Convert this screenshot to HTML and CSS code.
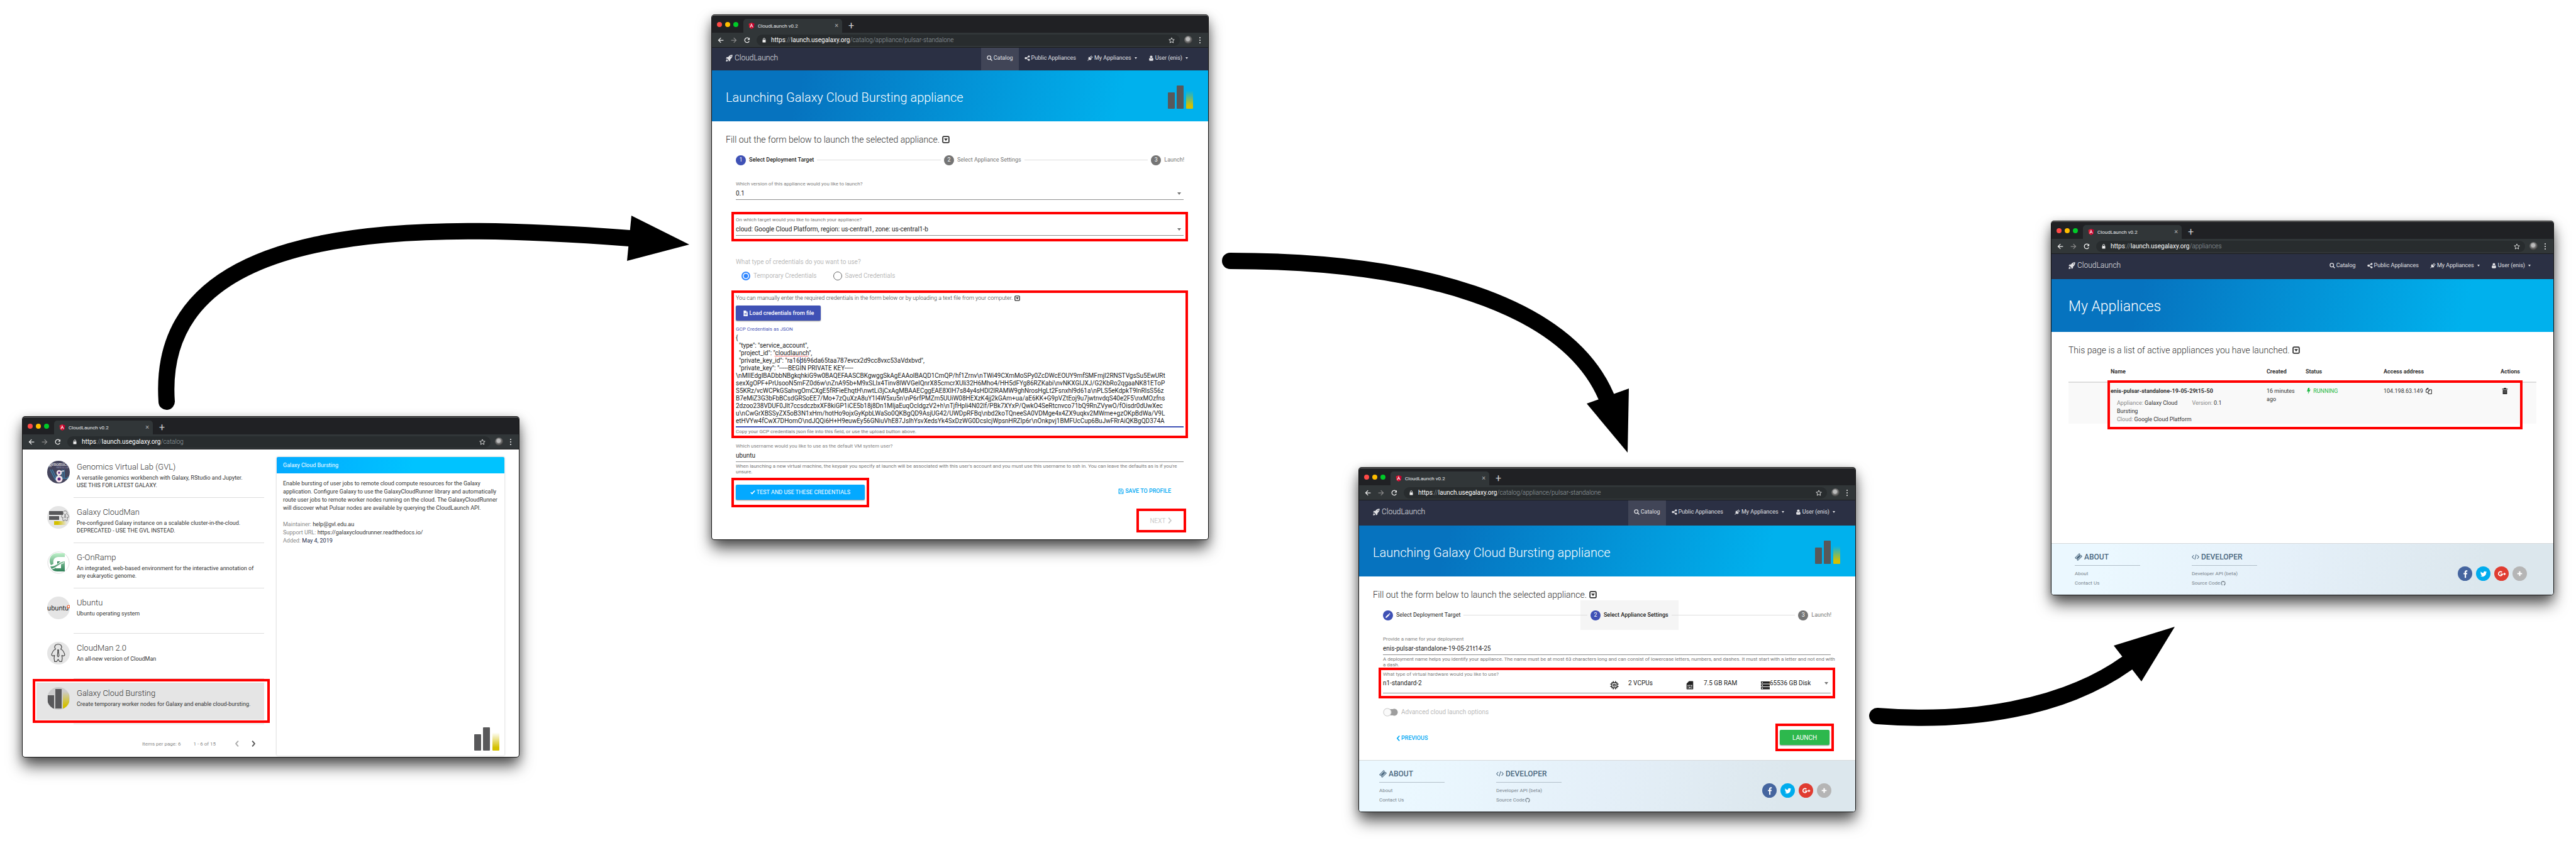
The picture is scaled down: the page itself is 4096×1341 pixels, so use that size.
FILE: index.html
```html
<!DOCTYPE html>
<html lang="en">
<head>
<meta charset="utf-8">
<meta name="viewport" content="width=device-width, initial-scale=1">
<title>CloudLaunch: launching an appliance</title>
<link rel="stylesheet" href="styles.css">
</head>
<body>
<svg class="sprite" aria-hidden="true">
  <defs>
    <linearGradient id="gold" x1="0" y1="0" x2="0" y2="1"><stop offset="0.1" stop-color="#d4c000" stop-opacity="0"/><stop offset="0.85" stop-color="#d4c000"/></linearGradient>
    <linearGradient id="goldx" x1="0" y1="0" x2="1" y2="0"><stop offset="0.3" stop-color="#d4c000"/><stop offset="1" stop-color="#d4c000" stop-opacity="0"/></linearGradient>
    <linearGradient id="green" x1="0" y1="0" x2="0" y2="1"><stop offset="0" stop-color="#bdf0c8"/><stop offset="1" stop-color="#2f8057"/></linearGradient>
    <clipPath id="round"><circle cx="18" cy="18" r="18"/></clipPath>
  </defs>
  <symbol id="angular" viewBox="0 0 16 16"><path fill="#dd1b34" d="M8 0l7 2.600-1.100 9.900L8 16l-5.900-3.500L1 2.600z"/><path fill="#c3002f" d="M8 0l7 2.600-1.100 9.900L8 16z"/><path fill="#fff" fill-rule="evenodd" d="M8 1.800L3.700 11.800h1.700l.9-2.200h3.400l.9 2.200h1.700zM8 5.300l1.300 3H6.700z"/></symbol>
  <symbol id="back" viewBox="0 0 16 16"><path fill="none" stroke="currentColor" stroke-width="2" d="M15 8H2.500M8.500 1.800L2.300 8l6.200 6.200"/></symbol>
  <symbol id="forward" viewBox="0 0 16 16"><path fill="none" stroke="currentColor" stroke-width="2" d="M1 8h12.500M7.500 1.800L13.700 8l-6.200 6.200"/></symbol>
  <symbol id="reload" viewBox="0 0 16 16"><path fill="none" stroke="currentColor" stroke-width="2.100" d="M13.300 10.500A6 6 0 1 1 12.300 3.800"/><path fill="currentColor" d="M14.500 1v6h-6z"/></symbol>
  <symbol id="lock" viewBox="0 0 16 16"><path fill="none" stroke="currentColor" stroke-width="1.800" d="M5 7V4.500a3 3 0 0 1 6 0V7"/><rect x="3" y="6.500" width="10" height="8.500" rx="1" fill="currentColor"/></symbol>
  <symbol id="star" viewBox="0 0 16 16"><path fill="none" stroke="currentColor" stroke-width="1.400" stroke-linejoin="round" d="M8 1.500l2 4.500 4.800.5-3.600 3.200 1.100 4.800L8 12l-4.300 2.500 1.100-4.800L1.200 6.500 6 6z"/></symbol>
  <symbol id="rocket" viewBox="0 0 16 16"><path fill="currentColor" fill-rule="evenodd" d="M15.500.5C11 .2 8.200 2 5.600 5.300L2.200 5.600.3 9l3 .2 3.500 3.500.3 3 3.300-1.900.3-3.400C14 7.800 15.800 5 15.500.5zM12 5.200a1.200 1.200 0 1 1 0-2.400 1.200 1.200 0 0 1 0 2.400zM2.300 10.500C.8 11.500.8 13.500.5 15.500c2 0 4-.3 5-1.800z"/></symbol>
  <symbol id="search" viewBox="0 0 16 16"><circle cx="6.700" cy="6.700" r="5" fill="none" stroke="currentColor" stroke-width="2.300"/><path stroke="currentColor" stroke-width="2.800" stroke-linecap="round" d="M10.700 10.700l3.600 3.600"/></symbol>
  <symbol id="share" viewBox="0 0 16 16"><path fill="none" stroke="currentColor" stroke-width="2" d="M12.500 3.200L4 8l8.500 4.800"/><circle cx="12.300" cy="3.300" r="2.800" fill="currentColor"/><circle cx="3.500" cy="8" r="2.900" fill="currentColor"/><circle cx="12.300" cy="12.700" r="2.800" fill="currentColor"/></symbol>
  <symbol id="plug" viewBox="0 0 16 16"><path fill="currentColor" d="M5 4l7 7c-2 2.200-5 2.800-7.400 1.600L1.500 15.700.3 14.500l3.100-3.100C2.200 9 2.800 6 5 4z"/><path fill="none" stroke="currentColor" stroke-width="2" stroke-linecap="round" d="M8 5.500L11.500 2M10.800 8.300l3.500-3.500"/></symbol>
  <symbol id="user" viewBox="0 0 16 16"><circle cx="8" cy="4.500" r="3.700" fill="currentColor"/><path fill="currentColor" d="M4.300 7.300C2.300 8 2 10.500 2 12.500 2 14.500 3 15.500 4.500 15.500h7c1.500 0 2.500-1 2.500-3 0-2-.3-4.500-2.300-5.200a5 5 0 0 1-7.400 0z"/></symbol>
  <symbol id="boxdown" viewBox="0 0 16 16"><rect x="1.500" y="1.500" width="13" height="13" rx="2" fill="none" stroke="currentColor" stroke-width="2.400"/><path fill="currentColor" d="M4 5.500h8L8 11z"/></symbol>
  <symbol id="file" viewBox="0 0 16 16"><path fill="currentColor" fill-rule="evenodd" d="M2.500 0H9v5h5v11h-11.500zM10 0l4 4h-4zM5 7v1h6.500V7zM5 9.500v1h6.500v-1zM5 12v1h6.500v-1z"/></symbol>
  <symbol id="check" viewBox="0 0 16 16"><path fill="none" stroke="currentColor" stroke-width="3" d="M1.500 8.500l4.200 4.200L14.500 3"/></symbol>
  <symbol id="save" viewBox="0 0 16 16"><path fill="none" stroke="currentColor" stroke-width="1.500" d="M1.500 1.500h10l3 3v10h-13zM4.500 1.500v4.500h6V1.500M4 14.500V9.500h8v5"/></symbol>
  <symbol id="right" viewBox="0 0 16 16"><path fill="none" stroke="currentColor" stroke-width="3" d="M5 1l6 7-6 7"/></symbol>
  <symbol id="left" viewBox="0 0 16 16"><path fill="none" stroke="currentColor" stroke-width="3" d="M11 1L5 8l6 7"/></symbol>
  <symbol id="pencil" viewBox="0 0 16 16"><path fill="currentColor" d="M2 11.500V14h2.500l7.300-7.300-2.500-2.500zM10 3.500L11.500 2 14 4.500 12.500 6z"/></symbol>
  <symbol id="cpu" viewBox="0 0 16 16"><path fill="none" stroke="currentColor" stroke-width="1.600" d="M3.500 3.500h9v9h-9zM6 .5v3M10 .5v3M6 12.500v3M10 12.500v3M.5 6h3M.5 10h3M12.500 6h3M12.500 10h3"/><path fill="none" stroke="currentColor" stroke-width="1.400" d="M6.500 6.500h3v3h-3z"/></symbol>
  <symbol id="sim" viewBox="0 0 16 16"><path fill="currentColor" fill-rule="evenodd" d="M6.500.5H13a1 1 0 0 1 1 1v13a1 1 0 0 1-1 1H3a1 1 0 0 1-1-1V5zM4 7.500v3h1.500v-3zM4 12v2h1.500v-2zM7 7.500V9h2V7.500zM7 10.500V14h2v-3.500zM10.500 7.500v3H12v-3zM10.500 12v2H12v-2z"/></symbol>
  <symbol id="disk" viewBox="0 0 16 16"><path fill="currentColor" fill-rule="evenodd" d="M0 1h16v4H0zM0 6.200h16v4H0zM0 11.400h16v4H0zM1.500 2.200v1.600h2V2.200zM1.500 7.400V9h2V7.400zM1.500 12.600v1.600h2v-1.600z"/></symbol>
  <symbol id="ticket" viewBox="0 0 16 16"><path fill="none" stroke="currentColor" stroke-width="1.400" d="M9.500 1l1.500 1.500a1.600 1.600 0 0 0 2.300 2.300L15 6.500 6.500 15 5 13.500a1.600 1.600 0 0 0-2.300-2.300L1 9.500z"/><path fill="currentColor" d="M9.300 3.700l3 3-5.600 5.600-3-3z"/></symbol>
  <symbol id="code" viewBox="0 0 16 16"><path fill="none" stroke="currentColor" stroke-width="1.400" d="M4.500 4L1 8l3.500 4M11.500 4L15 8l-3.500 4M9.500 2.500l-3 11"/></symbol>
  <symbol id="github" viewBox="0 0 16 16"><path fill="currentColor" d="M8 .5a7.500 7.500 0 0 0-2.400 14.600c.4.100.5-.2.500-.4v-1.500c-2 .5-2.500-.9-2.500-.9-.4-.9-.9-1.100-.9-1.100-.7-.5 0-.5 0-.5.800.1 1.200.8 1.200.8.700 1.200 1.800.8 2.200.6.100-.5.300-.8.500-1-1.700-.2-3.400-.8-3.400-3.700 0-.8.300-1.500.8-2-.1-.2-.3-1 .1-2 0 0 .6-.2 2.100.8a7 7 0 0 1 3.800 0c1.400-1 2-.8 2-.8.400 1 .2 1.800.1 2 .5.500.8 1.200.8 2 0 2.900-1.800 3.500-3.400 3.700.3.200.5.700.5 1.400v2.100c0 .2.100.5.500.4A7.500 7.500 0 0 0 8 .5z"/></symbol>
  <symbol id="fb" viewBox="0 0 16 16"><path fill="currentColor" d="M9.300 15V8.700h2l.3-2.400H9.300V4.800c0-.7.200-1.200 1.200-1.200h1.200V1.500C11.500 1.400 10.700 1.300 10 1.300c-1.900 0-3.100 1.100-3.100 3.200v1.800H4.800v2.400h2.100V15z"/></symbol>
  <symbol id="tw" viewBox="0 0 16 16"><path fill="currentColor" d="M15 3.700c-.5.200-1 .4-1.600.4.600-.3 1-.9 1.200-1.500-.5.300-1.100.5-1.800.7a2.900 2.900 0 0 0-4.900 2.600A8 8 0 0 1 2 2.900a2.900 2.900 0 0 0 .9 3.800c-.5 0-.9-.1-1.300-.3 0 1.400 1 2.500 2.300 2.800-.4.100-.9.100-1.300 0 .4 1.100 1.400 2 2.700 2A5.700 5.700 0 0 1 1 12.400a8.100 8.100 0 0 0 12.500-7.200c.6-.4 1.100-.9 1.500-1.500z"/></symbol>
  <symbol id="gp" viewBox="0 0 16 16"><path fill="none" stroke="currentColor" stroke-width="1.900" d="M8.400 5A3.700 3.700 0 1 0 9.300 8.400H5.500"/><path stroke="currentColor" stroke-width="1.600" d="M13 5.800v4.400M10.800 8h4.400"/></symbol>
  <symbol id="plus" viewBox="0 0 16 16"><path stroke="currentColor" stroke-width="3" d="M8 2.500v11M2.500 8h11"/></symbol>
  <symbol id="bolt" viewBox="0 0 16 16"><path fill="currentColor" d="M6.500 0h4L8.800 4.800l4-.8L6 16l1.500-7.500-4 1z"/></symbol>
  <symbol id="copy" viewBox="0 0 16 16"><path fill="none" stroke="currentColor" stroke-width="1.500" d="M6.500 4.500V.800h-2.500L1 4v7.500h5.500M4 .8V4H1M9.500 4.500L6.500 8v7.200H15V4.500zM9.500 4.500V8h-3"/></symbol>
  <symbol id="trash" viewBox="0 0 16 16"><path fill="currentColor" fill-rule="evenodd" d="M5.500 0h5l.7 2H15v1.800H1V2h3.800zM2.500 5h11v10a1 1 0 0 1-1 1h-9a1 1 0 0 1-1-1z"/><path stroke="#888" d="M5.500 6.500v7.500M8 6.500v7.500M10.500 6.500v7.500"/></symbol>
  <symbol id="bars" viewBox="0 0 40 37"><rect y="11" width="11" height="26" rx="1" fill="#58585a"/><rect x="14" width="11" height="37" rx="1" fill="#58585a"/><rect x="29" y="5" width="11" height="32" rx="1" fill="url(#gold)"/></symbol>
  <symbol id="man" viewBox="0 0 20 26"><path fill="none" stroke="#444" stroke-linejoin="round" d="M6.500 8C3.500 4.500 6 1 10 1s6.500 3.500 3.500 7c3 .5 4.500 4 5.500 7 .5 2-2 3-4 1.500 1 3 1 5.500 0 8.500h-3L10 22l-2 3H5c-1-3-1-5.500 0-8.500C3 18 .500 17 1 15c1-3 2.500-6.500 5.500-7zM9.200 9h1.600l-.4 2 .8 6-1.200 1.500L8.800 17l.8-6z"/></symbol>
</svg>

<main class="canvas">

  <section class="window w-catalog" aria-label="Appliance catalog">
    <header class="chrome">
      <div class="tabs"><span class="lights"><i></i><i></i><i></i></span>
        <span class="tab"><svg class="i10"><use href="#angular"/></svg><span>CloudLaunch v0.2</span><button class="x" aria-label="Close tab">×</button></span><button class="newtab" aria-label="New tab">+</button></div>
      <div class="toolbar"><svg class="i10"><use href="#back"/></svg><svg class="i10 dim"><use href="#forward"/></svg><svg class="i10"><use href="#reload"/></svg>
        <div class="omni"><svg class="i8"><use href="#lock"/></svg><span class="url">https<em>://</em>launch.usegalaxy.org<em>/catalog</em></span><svg class="i10"><use href="#star"/></svg></div>
        <span class="face"></span><span class="dots"><i></i><i></i><i></i></span></div>
    </header>
    <div class="catalog">
      <div>
        <ul class="apps">
          <li><a class="app" href="#gvl"><svg class="avatar" viewBox="0 0 36 36"><g clip-path="url(#round)"><rect width="36" height="36" fill="#45455d"/><text x="18" y="8" class="t-gen">genomics</text><text x="24" y="12" class="t-vl">VIRTUAL LAB</text><path fill="none" stroke="#3f7ea6" stroke-width="1.500" d="M5 14l8 16 3-7M8 14l7 14M24 14v14h9v-3M27 14v13"/><circle cx="19" cy="29" r="4" fill="#5a2a82" stroke="#f6e6ec" stroke-width="3"/><circle cx="19" cy="19" r="3" fill="#5a2a82" stroke="#f6e6ec" stroke-width="2.500"/><path stroke="#f6e6ec" stroke-width="1.500" d="M21 17l6-1M17 22l2 3"/></g></svg><span class="what"><b>Genomics Virtual Lab (GVL)</b><span>A versatile genomics workbench with Galaxy, RStudio and Jupyter.<br>USE THIS FOR LATEST GALAXY.</span></span></a></li>
          <li><a class="app" href="#cloudman"><svg class="avatar" viewBox="0 0 36 36"><circle cx="18" cy="18" r="18" fill="#e5e5e5"/><rect x="3" y="8" width="22" height="6" fill="#58585a"/><rect x="3" y="16" width="16" height="6" fill="#58585a"/><rect x="11" y="24" width="20" height="6" fill="url(#goldx)"/><use href="#man" x="22" y="7" width="13" height="17"/></svg><span class="what"><b>Galaxy CloudMan</b><span>Pre-configured Galaxy instance on a scalable cluster-in-the-cloud.<br>DEPRECATED - USE THE GVL INSTEAD.</span></span></a></li>
          <li><a class="app" href="#gonramp"><svg class="avatar" viewBox="0 0 36 36"><circle cx="18" cy="18" r="17" fill="#fff" stroke="#ddd"/><path fill="url(#green)" d="M28 3v6H18c-7 0-9 5-8 11l-4 2C1 13 6 3 16 3zM5 24c9 1 12-7 23-8v16H16C10 32 7 29 5 24zm9 1v2h8v-6h-2c-2 2-4 3-6 4z"/><path fill="#2f8057" d="M16 16h5l-5 4z"/><path fill="none" stroke="#fff" stroke-width="1.200" d="M8 28c7-1 9-7 19-10"/></svg><span class="what"><b>G-OnRamp</b><span>An integrated, web-based environment for the interactive annotation of<br>any eukaryotic genome.</span></span></a></li>
          <li><a class="app" href="#ubuntu"><svg class="avatar" viewBox="0 0 36 36"><circle cx="18" cy="18" r="18" fill="#e5e5e5"/><text x="0" y="22" class="t-ub">ubuntu</text><circle cx="34" cy="16" r="2" fill="#fff" stroke="#e9531f" stroke-width="1.200"/></svg><span class="what"><b>Ubuntu</b><span>Ubuntu operating system</span></span></a></li>
          <li><a class="app" href="#cloudman2"><svg class="avatar" viewBox="0 0 36 36"><circle cx="18" cy="18" r="18" fill="#e5e5e5"/><use href="#man" x="6" y="2" width="23" height="31"/></svg><span class="what"><b>CloudMan 2.0</b><span>An all-new version of CloudMan</span></span></a></li>
          <li><a class="app selected" href="#bursting"><svg class="avatar" viewBox="0 0 36 36"><circle cx="18" cy="18" r="18" fill="#ccc"/><g clip-path="url(#round)"><rect x="1" y="13" width="10" height="21" fill="#58585a"/><rect x="13" y="3" width="10" height="31" fill="#58585a"/><rect x="25" y="4" width="10" height="30" fill="url(#gold)"/></g></svg><span class="what"><b>Galaxy Cloud Bursting</b><span>Create temporary worker nodes for Galaxy and enable cloud-bursting.</span></span></a></li>
        </ul>
        <nav class="pager"><span>Items per page: 6</span><span>1 - 6 of 15</span><button aria-label="Previous page" disabled><svg class="i10"><use href="#left"/></svg></button><button aria-label="Next page"><svg class="i10"><use href="#right"/></svg></button></nav>
      </div>
      <article class="panel">
        <h2>Galaxy Cloud Bursting</h2>
        <div class="about">
          <p>Enable bursting of user jobs to remote cloud compute resources for the Galaxy<br>application. Configure Galaxy to use the GalaxyCloudRunner library and automatically<br>route user jobs to remote worker nodes running on the cloud. The GalaxyCloudRunner<br>will discover what Pulsar nodes are available by querying the CloudLaunch API.</p>
          <p><span class="muted">Maintainer:</span> help@gvl.edu.au<br><span class="muted">Support URL:</span> <a href="#docs">https://galaxycloudrunner.readthedocs.io/</a><br><span class="muted">Added:</span> <span class="navy">May 4, 2019</span></p>
        </div>
        <svg class="logo"><use href="#bars"/></svg>
      </article>
    </div>
  </section>

  <section class="window w-target" aria-label="Select deployment target">
    <header class="chrome">
      <div class="tabs"><span class="lights"><i></i><i></i><i></i></span>
        <span class="tab"><svg class="i10"><use href="#angular"/></svg><span>CloudLaunch v0.2</span><button class="x" aria-label="Close tab">×</button></span><button class="newtab" aria-label="New tab">+</button></div>
      <div class="toolbar"><svg class="i10"><use href="#back"/></svg><svg class="i10 dim"><use href="#forward"/></svg><svg class="i10"><use href="#reload"/></svg>
        <div class="omni"><svg class="i8"><use href="#lock"/></svg><span class="url">https<em>://</em>launch.usegalaxy.org<em>/catalog/appliance/pulsar-standalone</em></span><svg class="i10"><use href="#star"/></svg></div>
        <span class="face"></span><span class="dots"><i></i><i></i><i></i></span></div>
    </header>
    <nav class="site short"><a class="brand" href="#home"><svg class="i11"><use href="#rocket"/></svg>CloudLaunch</a>
      <a class="on" href="#catalog"><svg class="i9"><use href="#search"/></svg>Catalog</a><a href="#public"><svg class="i9"><use href="#share"/></svg>Public Appliances</a><a href="#mine"><svg class="i9"><use href="#plug"/></svg>My Appliances<i class="caret"></i></a><a href="#user"><svg class="i9"><use href="#user"/></svg>User (enis)<i class="caret"></i></a></nav>
    <div class="hero"><h1>Launching Galaxy Cloud Bursting appliance</h1><svg class="logo"><use href="#bars"/></svg></div>
    <div class="page">
      <p class="intro">Fill out the form below to launch the selected appliance. <svg class="i12"><use href="#boxdown"/></svg></p>
      <ol class="steps"><li class="step active"><i>1</i>Select Deployment Target</li><li class="rule"></li><li class="step"><i class="off">2</i>Select Appliance Settings</li><li class="rule"></li><li class="step"><i class="off">3</i>Launch!</li></ol>
      <form class="form">
        <div class="field"><label for="version">Which version of this appliance would you like to launch?</label><div class="control"><select id="version"><option>0.1</option></select><i class="caret"></i></div></div>
        <div class="mark m-target"><div class="field"><label for="target">On which target would you like to launch your appliance?</label><div class="control"><select id="target"><option>cloud: Google Cloud Platform, region: us-central1, zone: us-central1-b</option></select><i class="caret"></i></div></div></div>
        <fieldset class="creds"><legend>What type of credentials do you want to use?</legend>
          <label><input type="radio" name="cred" checked>Temporary Credentials</label><label><input type="radio" name="cred">Saved Credentials</label></fieldset>
        <div class="mark m-json">
          <p class="manual">You can manually enter the required credentials in the form below or by uploading a text file from your computer. <svg class="i9"><use href="#boxdown"/></svg></p>
          <button class="btn load" type="button"><svg class="i9"><use href="#file"/></svg>Load credentials from file</button>
          <label class="blue" for="json">GCP Credentials as JSON</label>
          <div class="json"><textarea id="json" rows="12" spellcheck="false">{
  "type": "service_account",
  "project_id": "cloudlaunch",
  "private_key_id": "ra16d696da65taa787evcx2d9cc8vxc53aVdxbvd",
  "private_key": "-----BEGIN PRIVATE KEY-----
\nMIIEdgIBADbbNBgkqhkiG9w0BAQEFAASCBKgwggSkAgEAAoIBAQD1CmQP/hf1Zrnv\nTWi49CXmMoSPy0ZcDWcEOUY9mfSMFmjI2RNSTVgsSu5EwURt
sexXgOPF+PrUsooN5mFZ0d6w\nZnA95b+M9xSLIx4Tinv8lWVGeIQnrX85cmcrXUli32H6Mho4/HH5dFYg86RZKabi\nvNKXGIJXJ/G2KbRo2qgaaNK81EToP
S5KRz/vcWCPkGSahvgOmCXgE5fRFieEhqtH\nwtLi3jCxAgMBAAECggEAE8XIH7s84y4sHDl2lRAMW9ghNrosHgLt2Fsnxhl9d61a\nPLS5eKdpkT9lnRlsS56z
B7eMiZ3G3bFbBCsdGRSoEE7/Mo+7zQuXzA8uY1l4W5xu5n\nP6rfPMZm5UUiW08HEXzK4jj2kGAm+ua/aE6KK+G9pVZtEoj9u7jwtnvdqS40e2F5\nxMOzfns
2dzoo238VDUF0Jlt7ccsdczbxXF8kiGP1iCE5b18j8Dn1MljaEuqOcIdgzV2+h\nTjfHpli4N02lf/PBk7XYxP/QwkO4SeRtcnvco71bQ9RnZVywO/fOisdr0dUwXec
u\nCwGrXBSSyZX5oB3N1xHm/hotHo9ojxGyKpbLWaSo0QKBgQD9AsjUG42/UWDpRFBq\nbd2koTQneeSA0VDMge4x4ZX9uqkv2MWme+gzOKpBdWa/V9L
etHVYw4fCwX7DHomO\ndJQQi6H+H9euwEy56GNiuVhE87JslhYsvXedsYk4SxDzWG0DcslcjWpsnHRZlp6r\nOnkpvj1BMFUcCup6BuJwFRrAiQKBgQD374A</textarea><i class="squiggle"></i><i class="cursor"></i></div>
          <p class="hint">Copy your GCP credentials json file into this field, or use the upload button above.</p>
        </div>
        <div class="field f-user"><label for="vmuser">Which username would you like to use as the default VM system user?</label><div class="control"><input id="vmuser" value="ubuntu"></div>
        <p class="hint">When launching a new virtual machine, the keypair you specify at launch will be associated with this user's account and you must use this username to ssh in. You can leave the defaults as is if you're<br>unsure.</p></div>
        <div class="row"><div class="mark m-test"><button class="btn test" type="button"><svg class="i8"><use href="#check"/></svg>TEST AND USE THESE CREDENTIALS</button></div>
          <button class="link" type="button"><svg class="i9"><use href="#save"/></svg>SAVE TO PROFILE</button></div>
        <div class="mark m-next"><button class="next" type="button" disabled>NEXT<svg class="i10"><use href="#right"/></svg></button></div>
      </form>
    </div>
  </section>

  <section class="window w-settings" aria-label="Select appliance settings">
    <header class="chrome">
      <div class="tabs"><span class="lights"><i></i><i></i><i></i></span>
        <span class="tab"><svg class="i10"><use href="#angular"/></svg><span>CloudLaunch v0.2</span><button class="x" aria-label="Close tab">×</button></span><button class="newtab" aria-label="New tab">+</button></div>
      <div class="toolbar"><svg class="i10"><use href="#back"/></svg><svg class="i10 dim"><use href="#forward"/></svg><svg class="i10"><use href="#reload"/></svg>
        <div class="omni"><svg class="i8"><use href="#lock"/></svg><span class="url">https<em>://</em>launch.usegalaxy.org<em>/catalog/appliance/pulsar-standalone</em></span><svg class="i10"><use href="#star"/></svg></div>
        <span class="face"></span><span class="dots"><i></i><i></i><i></i></span></div>
    </header>
    <nav class="site"><a class="brand" href="#home"><svg class="i11"><use href="#rocket"/></svg>CloudLaunch</a>
      <a class="on" href="#catalog"><svg class="i9"><use href="#search"/></svg>Catalog</a><a href="#public"><svg class="i9"><use href="#share"/></svg>Public Appliances</a><a href="#mine"><svg class="i9"><use href="#plug"/></svg>My Appliances<i class="caret"></i></a><a href="#user"><svg class="i9"><use href="#user"/></svg>User (enis)<i class="caret"></i></a></nav>
    <div class="hero"><h1>Launching Galaxy Cloud Bursting appliance</h1><svg class="logo"><use href="#bars"/></svg></div>
    <div class="page">
      <p class="intro">Fill out the form below to launch the selected appliance. <svg class="i12"><use href="#boxdown"/></svg></p>
      <ol class="steps"><li class="step done"><i><svg class="i10"><use href="#pencil"/></svg></i>Select Deployment Target</li><li class="rule"></li><li class="step active hover"><i>2</i>Select Appliance Settings</li><li class="rule"></li><li class="step"><i class="off">3</i>Launch!</li></ol>
      <form class="form">
        <div class="field"><label for="name">Provide a name for your deployment</label><div class="control"><input id="name" value="enis-pulsar-standalone-19-05-21t14-25"></div>
        <p class="hint">A deployment name helps you identify your appliance. The name must be at most 63 characters long and can consist of lowercase letters, numbers, and dashes. It must start with a letter and not end with<br>a dash.</p></div>
        <div class="mark m-hw"><div class="field"><label for="hw">What type of virtual hardware would you like to use?</label><div class="control specs"><select id="hw"><option>n1-standard-2</option></select><span><svg class="i14"><use href="#cpu"/></svg>2 VCPUs</span><span><svg class="i14"><use href="#sim"/></svg>7.5 GB RAM</span><span class="tight"><svg class="i14"><use href="#disk"/></svg>65536 GB Disk</span><i class="caret"></i></div></div></div>
        <label class="toggle"><input type="checkbox">Advanced cloud launch options</label>
        <div class="row"><button class="link prev" type="button"><svg class="i9"><use href="#left"/></svg>PREVIOUS</button><div class="mark m-launch"><button class="btn launch" type="button">LAUNCH</button></div></div>
      </form>
    </div>
    <footer class="foot"><div><h3><svg class="i12"><use href="#ticket"/></svg>ABOUT</h3><a href="#about">About</a><a href="#contact">Contact Us</a></div>
      <div><h3><svg class="i12"><use href="#code"/></svg>DEVELOPER</h3><a href="#api">Developer API (beta)</a><a href="#source">Source Code <svg class="i8"><use href="#github"/></svg></a></div>
      <nav class="social"><a class="fb" href="#fb" aria-label="Facebook"><svg class="i14"><use href="#fb"/></svg></a><a class="tw" href="#tw" aria-label="Twitter"><svg class="i12"><use href="#tw"/></svg></a><a class="gp" href="#gp" aria-label="Google Plus"><svg class="i14"><use href="#gp"/></svg></a><a class="more" href="#more" aria-label="More"><svg class="i11"><use href="#plus"/></svg></a></nav></footer>
  </section>

  <section class="window w-mine" aria-label="My appliances">
    <header class="chrome">
      <div class="tabs"><span class="lights"><i></i><i></i><i></i></span>
        <span class="tab"><svg class="i10"><use href="#angular"/></svg><span>CloudLaunch v0.2</span><button class="x" aria-label="Close tab">×</button></span><button class="newtab" aria-label="New tab">+</button></div>
      <div class="toolbar"><svg class="i10"><use href="#back"/></svg><svg class="i10 dim"><use href="#forward"/></svg><svg class="i10"><use href="#reload"/></svg>
        <div class="omni"><svg class="i8"><use href="#lock"/></svg><span class="url">https<em>://</em>launch.usegalaxy.org<em>/appliances</em></span><svg class="i10"><use href="#star"/></svg></div>
        <span class="face"></span><span class="dots"><i></i><i></i><i></i></span></div>
    </header>
    <nav class="site"><a class="brand" href="#home"><svg class="i11"><use href="#rocket"/></svg>CloudLaunch</a>
      <a href="#catalog"><svg class="i9"><use href="#search"/></svg>Catalog</a><a href="#public"><svg class="i9"><use href="#share"/></svg>Public Appliances</a><a href="#mine"><svg class="i9"><use href="#plug"/></svg>My Appliances<i class="caret"></i></a><a href="#user"><svg class="i9"><use href="#user"/></svg>User (enis)<i class="caret"></i></a></nav>
    <div class="hero"><h1>My Appliances</h1></div>
    <div class="page">
      <p class="intro">This page is a list of active appliances you have launched. <svg class="i12"><use href="#boxdown"/></svg></p>
      <div class="list">
        <table>
          <colgroup><col class="c1"><col class="c4"><col class="c1"><col class="c2"><col class="c3"><col class="c1"></colgroup>
          <thead><tr><th></th><th>Name</th><th>Created</th><th>Status</th><th>Access address</th><th>Actions</th></tr></thead>
          <tbody><tr><td></td><td><b>enis-pulsar-standalone-19-05-29t15-50</b><div class="detail"><span><span class="muted">Appliance:</span> Galaxy Cloud<br>Bursting</span><span><span class="muted">Version:</span> 0.1</span><span class="all"><span class="muted">Cloud:</span> Google Cloud Platform</span></div></td><td>16 minutes ago</td><td class="running"><svg class="i10"><use href="#bolt"/></svg> RUNNING</td><td>104.198.63.149 <svg class="i10 ink"><use href="#copy"/></svg></td><td><button class="del" aria-label="Delete"><svg class="i10"><use href="#trash"/></svg></button></td></tr></tbody>
        </table>
        <i class="ring"></i>
      </div>
    </div>
    <footer class="foot"><div><h3><svg class="i12"><use href="#ticket"/></svg>ABOUT</h3><a href="#about">About</a><a href="#contact">Contact Us</a></div>
      <div><h3><svg class="i12"><use href="#code"/></svg>DEVELOPER</h3><a href="#api">Developer API (beta)</a><a href="#source">Source Code <svg class="i8"><use href="#github"/></svg></a></div>
      <nav class="social"><a class="fb" href="#fb" aria-label="Facebook"><svg class="i14"><use href="#fb"/></svg></a><a class="tw" href="#tw" aria-label="Twitter"><svg class="i12"><use href="#tw"/></svg></a><a class="gp" href="#gp" aria-label="Google Plus"><svg class="i14"><use href="#gp"/></svg></a><a class="more" href="#more" aria-label="More"><svg class="i11"><use href="#plus"/></svg></a></nav></footer>
  </section>

  <svg class="arrows" viewBox="0 0 4096 1341" aria-hidden="true">
    <g fill="none" stroke="#000" stroke-width="26" stroke-linecap="round">
      <path d="M265 639C245 345 671 354 1001 379"/>
      <path d="M1956 415C2253 415 2490 482 2554 631"/>
      <path d="M2985 1139C3130 1150 3280 1128 3382 1055"/>
    </g>
    <path d="M1004 343L1096 389L997 415z"/>
    <path d="M2590 618L2588 720L2523 642z"/>
    <path d="M3361 1027L3458 997L3405 1084z"/>
  </svg>
</main>
</body>
</html>
```
FILE: styles.css
```css
*{box-sizing:border-box}
body{margin:0;background:#fff;font:400 9px/13px Roboto,"Liberation Sans",sans-serif;color:#333}
h1,h2,h3,p,ul,ol,fieldset,legend{margin:0;padding:0;border:0;font-weight:400}
ul,ol{list-style:none}
a{color:inherit;text-decoration:none}
i{font-style:normal}
button,input,select,textarea{font:inherit;color:inherit;margin:0;padding:0;border:0;background:none;border-radius:0;outline:0}
svg{display:block;flex:none}
.sprite{position:absolute;width:0;height:0}
.i8{width:8px;height:8px}
.i9{width:9px;height:9px}
.i10{width:10px;height:10px}
.i11{width:11px;height:11px}
.i12{width:12px;height:12px}
.i14{width:14px;height:14px}
.muted{color:#888}
.navy{color:#1c2b4a}
.caret{border:3px solid transparent;border-top:4px solid currentColor;border-bottom:0;flex:none}

/* Canvas: four windows, each in its own column, joined by arrows */
.canvas{position:relative;display:grid;align-items:start;min-height:100vh;overflow:hidden;
  grid-template-columns:36fr minmax(0,789fr) 307fr minmax(0,789fr) 240fr minmax(0,789fr) 312fr minmax(0,798fr) 36fr}
.arrows{position:absolute;left:0;top:0;width:100%;height:auto;pointer-events:none}
.window{grid-row:1;background:#fff;border-radius:4px;overflow:hidden;
  box-shadow:0 0 0 1px #111,0 15px 24px rgba(0,0,0,.62),0 4px 16px rgba(0,0,0,.28)}
.w-catalog{grid-column:2;margin-top:663px}
.w-target{grid-column:4;margin-top:24px}
.w-settings{grid-column:6;margin-top:744px}
.w-mine{grid-column:8;margin-top:352px}

/* Browser frame */
.tabs{display:flex;align-items:flex-end;height:28px;background:#202124;border-top:1px solid #777}
.lights{display:flex;gap:5px;padding:0 8px;align-self:center}
.lights i{width:8px;height:8px;border-radius:50%;background:#ff4a47}
.lights i+i{background:#ffbd00}
.lights i+i+i{background:#00ca28}
.tab{display:flex;align-items:center;gap:5px;width:157px;height:22px;padding:0 6px 0 8px;border-radius:5px 5px 0 0;background:#313638;color:#e8eaed;font-size:8px}
.x{margin-left:auto;color:#aaa;font-size:11px;line-height:12px}
.newtab{align-self:center;margin:4px 0 0 10px;color:#ccc;font-size:16px;line-height:16px}
.toolbar{display:flex;align-items:center;gap:11px;height:24px;padding:0 12px 0 9px;background:#313638;border-bottom:1px solid #1c1e20;color:#eee}
.dim{color:#888}
.omni{flex:1;display:flex;align-items:center;gap:7px;height:18px;margin-left:-1px;padding:0 8px;border-radius:9px;background:#282c2e}
.url{flex:1;font-size:10px;color:#fff}
.url em{font-style:normal;color:#9aa0a6;font-weight:300}
.face{width:13px;height:13px;margin-left:-4px;border-radius:50%;background:radial-gradient(circle at 45% 40%,#bbb 0 25%,#777 40%,#333 75%)}
.dots{display:grid;gap:2px}
.dots i{width:2px;height:2px;border-radius:50%;background:#eee}

/* Site header */
.site{display:flex;height:40px;padding:0 23px 3px 22px;background:#2b3044;color:#e0e0e4}
.site a{display:flex;align-items:center;gap:2px;padding:0 9px}
.site .brand{margin-right:auto;padding:0;gap:3px;font-size:12px;font-weight:300}
.short{height:36px}
.site .on{margin-bottom:-3px;padding-bottom:3px;background:#414557}
.site .caret{border-width:3px 2px 0;margin-left:3px}
.hero{display:flex;align-items:center;justify-content:space-between;height:81px;padding:4px 24px 0 22px;color:#fff;background:linear-gradient(105deg,#0673bf 18%,#00b1ed 82%)}
.hero h1{font-size:20px;line-height:24px;font-weight:300}
.logo{width:40px;height:37px}
.page{padding:20px 22px 0}
.intro{display:flex;align-items:center;gap:4px;font-size:14px;line-height:18px;font-weight:300}

/* Stepper */
.steps{display:flex;align-items:center;height:47px}
.step{display:flex;align-items:center;gap:5px;height:47px;padding:0 16px;color:#757575}
.step i{display:flex;align-items:center;justify-content:center;width:16px;height:16px;border-radius:50%;background:#3f51b5;color:#fff;font-weight:400}
.step .off{background:#757575}
.active{color:#222;font-weight:500}
.done{color:#222}
.hover{background:#f5f5f5}
.rule{flex:1;height:1px;margin:0 -11px;background:#ddd;position:relative}

/* Form */
.form{padding:0 17px 0 16px}
.field{padding-top:9px}
.field label{display:block;font-size:8px;line-height:11px;color:#808080}
.control{display:flex;align-items:center;height:20px;padding-right:4px;border-bottom:1px solid #909090;font-size:10px;color:#222}
.control input,.control select{flex:1;min-width:0;appearance:none;line-height:18px}
.control .caret{color:#757575}
.hint{padding-top:2px;font-size:8px;line-height:9px;color:#757575;white-space:nowrap}
.mark{border:4px solid red;margin:0 -7px;padding:0 3px}
.mark .field{padding:0}
.m-target{margin-top:19px;padding-top:3px;padding-bottom:5px}
.creds{display:flex;align-items:center;flex-wrap:wrap;padding:26px 0 0 9px;font-size:10px;line-height:14px;color:#bbb}
.creds legend{float:left;width:100%;margin:0 0 8px -9px}
.creds label{display:flex;align-items:center;gap:5px;margin-right:26px}
.creds input{appearance:none;width:14px;height:14px;border:1px solid #666;border-radius:50%}
.creds input:checked{border:2px solid #2f86ff;background:radial-gradient(circle,#2f86ff 0 3px,#fff 4px)}
.m-json{margin-top:16px;padding-top:2px;padding-bottom:2px}
.manual{display:flex;align-items:center;gap:3px;line-height:12px;font-weight:300}
.btn{display:flex;align-items:center;justify-content:center;gap:2px;height:24px;border-radius:2px;color:#fff;box-shadow:0 1px 2px rgba(0,0,0,.45)}
.load{width:135px;margin-top:6px;background:#3f51b5;font-weight:500}
.blue{display:block;margin:9px 0 3px;font-size:8px;line-height:10px;color:#3f51b5}
.json{position:relative;border-bottom:2px solid #3f51b5}
.json textarea{display:block;width:100%;height:146px;line-height:12px;font-size:10px;color:#222;resize:none;white-space:pre;overflow:hidden}
.squiggle{position:absolute;left:62px;top:34px;width:53px;border-bottom:1px dotted red}
.cursor{position:absolute;left:102px;top:36px;width:1px;height:12px;background:#3f51b5}
.f-user{padding-top:7px}
.row{display:flex;align-items:center;justify-content:space-between}
.m-test{margin-top:5px;margin-right:0;padding-top:7px;padding-bottom:8px}
.test{width:205px;background:#03a9ff}
.link{display:flex;align-items:center;gap:2px;margin-right:20px;color:#03a9f4;font-weight:500}
.m-next{width:79px;height:38px;margin:2px -4px 11px auto;display:flex;align-items:center;justify-content:center}
.next{display:flex;align-items:center;gap:1px;font-size:10px;color:#ccc}
.m-hw{padding-top:1px;padding-bottom:4px}
.specs{height:25px;padding-bottom:7px}
.specs span{display:flex;align-items:center;gap:15px;width:120px}
.specs svg{margin-top:6px}
.specs .tight{gap:0;width:101px}
.toggle{display:flex;align-items:center;gap:5px;margin-top:15px;font-size:10px;line-height:14px;color:#bbb}
.toggle input{appearance:none;width:24px;height:14px;background:radial-gradient(circle at 7px 7px,#fafafa 5px,#ccc 6px,transparent 7px),radial-gradient(circle at 18px 7px,#9e9e9e 5px,transparent 6px),linear-gradient(#9e9e9e,#9e9e9e) 8px 2px/10px 10px no-repeat}
.prev{margin-left:20px;gap:0}
.m-launch{margin:11px -5px 14px 0;padding:6px 3px}
.launch{width:79px;background:#2db84d;font-size:10px}

/* Footer */
.foot{display:flex;align-items:flex-start;padding:14px 38px 11px 32px;border-top:1px solid #d5d9dc;background:linear-gradient(105deg,#ebf8ff 10%,#e4eff8 50%,#dce7ed 85%);color:#78838c;font-size:8px;line-height:15px}
.foot>div{width:104px;margin-right:82px}
.foot h3{display:flex;align-items:center;gap:3px;margin-bottom:5px;padding-bottom:6px;border-bottom:1px solid #b3c0ca;font-size:12px;line-height:14px;font-weight:500;color:#4c6980}
.foot>div a{display:flex;align-items:center;gap:1px;white-space:nowrap}
.social{display:flex;gap:6px;margin:22px 0 0 auto}
.social a{display:flex;align-items:center;justify-content:center;width:23px;height:23px;border-radius:50%;color:#fff}
.fb{background:#45659f}
.tw{background:#00aced}
.gp{background:#e03c31}
.more{background:#b5b5b5}

/* Catalog */
.catalog{display:grid;grid-template-columns:minmax(0,1fr) minmax(0,1fr);gap:20px;padding:5px 23px 2px 22px}
.apps li{padding:6px 0}
.apps li::after{content:"";display:block;height:1px;margin:6px 0 -6px 59px;background:#ddd}
.app{position:relative;display:flex;gap:11px;height:59px;padding:7px 0 0 17px}
.avatar{width:36px;height:36px}
.what{padding-top:1px;line-height:12px;white-space:nowrap}
.what b{display:block;margin-bottom:3px;font-size:13px;line-height:17px;font-weight:300}
.selected{background:#e5e5e5}
.selected::before{content:"";position:absolute;inset:-6px -9px -5px -6px;border:4px solid red}
.t-gen{font:8px "Liberation Serif",serif;fill:#fff;text-anchor:middle}
.t-vl{font:3px "Liberation Serif",serif;fill:#aac;text-anchor:middle}
.t-ub{font:10px "Open Sans",sans-serif;fill:#000}
.pager{display:flex;align-items:center;justify-content:flex-end;gap:20px;height:62px;margin-bottom:-12px;padding-right:12px;font-size:8px;color:#888}
.pager button{color:#555;margin-left:4px}
.pager button:disabled{margin-left:9px;color:#aaa}
.pager button+button{margin-left:-4px}
.panel{display:flex;flex-direction:column;margin-top:7px;border-radius:2px;box-shadow:0 0 3px rgba(0,0,0,.25);line-height:13px}
.panel h2{padding:0 10px;border-radius:2px 2px 0 0;background:linear-gradient(105deg,#03a9ff,#00c3ff 60%);color:#fff;line-height:26px;font-size:9px}
.about{padding:10px 10px 0;white-space:nowrap}
.about p{margin-bottom:13px}
.panel .logo{margin:auto 8px 8px auto}

/* Appliance list */
.w-mine .site,.w-mine .page{padding-left:27px;padding-right:27px}
.w-mine .hero{height:84px;padding-left:27px}
.w-mine .hero h1{font-size:23px}
.w-mine .page{min-height:336px}
.w-mine .foot{padding-left:37px;padding-right:42px}
.list{position:relative;padding-top:9px}
.list table{width:100%;table-layout:fixed;border-collapse:collapse}
.c1{width:8.3333%}
.c2{width:16.6667%}
.c3{width:25%}
.c4{width:33.3333%}
.list th{height:33px;padding:0 5px;text-align:left;font-weight:700}
.list td{padding:7px 5px 0;vertical-align:top;background:#f9f9f9;border-top:2px solid #ddd}
.list td svg{display:inline-block;vertical-align:-2px}
.running{color:#1cb841}
.ink{color:#222;margin-left:2px}
.detail{display:grid;grid-template-columns:11fr 10fr;padding:6px 0 0 10px}
.all{white-space:nowrap}
.del{margin-left:2px;color:#222}
.ring{position:absolute;left:62px;right:22px;top:39px;height:78px;border:4px solid red}
```
